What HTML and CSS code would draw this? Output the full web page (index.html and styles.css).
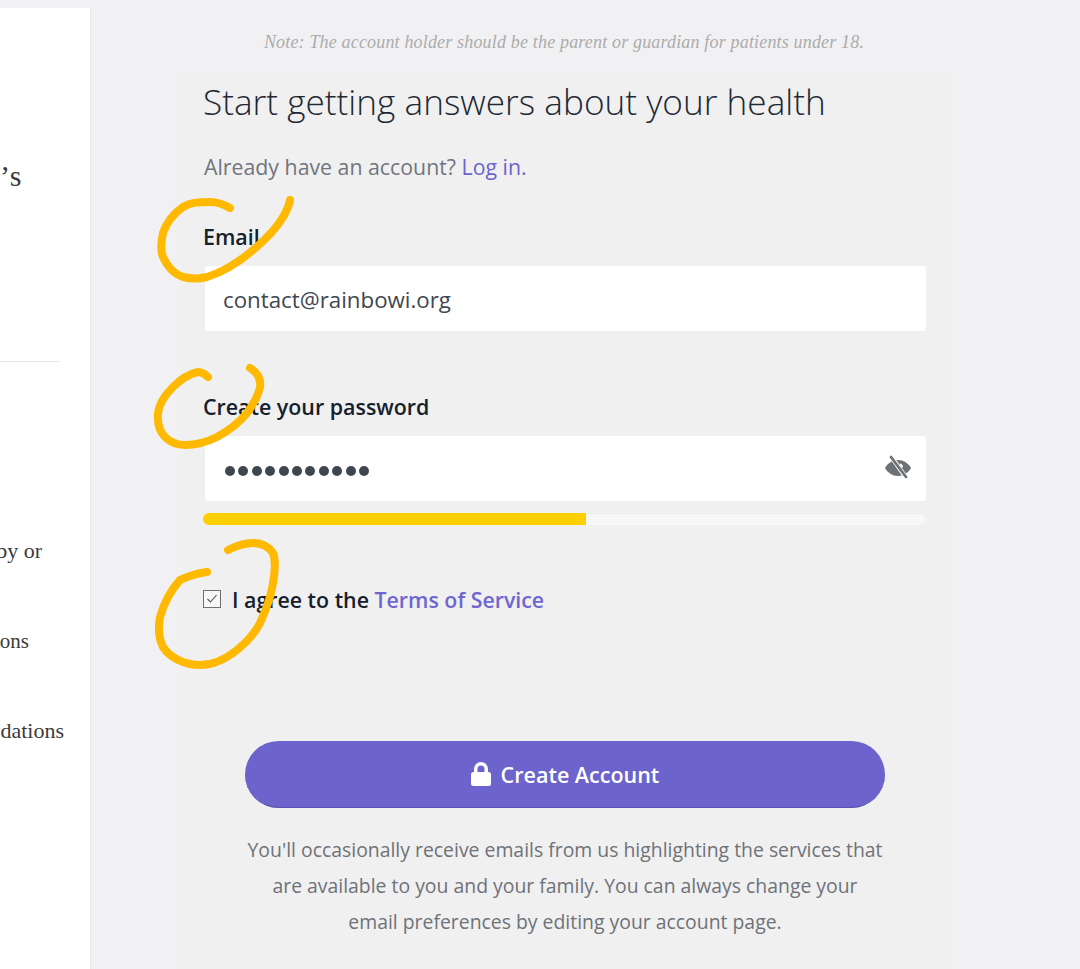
FILE: index.html
```html
<!DOCTYPE html>
<html>
<head>
  <title>Create account</title>
  <link rel="stylesheet" href="styles.css">
</head>
<body>

<div class="page">
  <aside class="side">
    <p class="side-text side-title">’s</p>
    <div class="side-rule"></div>
    <p class="side-text side-first">by or</p>
    <p class="side-text side-second">ons</p>
    <p class="side-text side-third">dations</p>
  </aside>

  <main class="main">
    <p class="note">Note: The account holder should be the parent or guardian for patients under 18.</p>

    <section class="card">
      <h1 class="title">Start getting answers about your health</h1>
      <p class="login">Already have an account? <a href="#">Log in.</a></p>

      <label class="label label-email">Email</label>
      <div class="field">contact@rainbowi.org</div>

      <label class="label label-password">Create your password</label>
      <div class="field field-password">
        <span class="dots">
          <i></i><i></i><i></i><i></i><i></i><i></i><i></i><i></i><i></i><i></i><i></i>
        </span>
        <svg class="eye" viewBox="0 0 28 24" width="28" height="24">
          <path fill="#6d7276" d="M14 5C8.500 5 3.500 8.500 1 13c2.500 4.500 7.500 8 13 8s10.500-3.500 13-8C24.500 8.500 19.500 5 14 5z"/>
          <path fill="#fff" d="M16.500 8.500c1.500.5 2.700 2 2.500 3.500l-1 .8-2.800-3.600z"/>
          <path stroke="#fff" stroke-width="4.500" d="M6 0l17 24"/>
          <path stroke="#6d7276" stroke-width="2.800" stroke-linecap="round" d="M7 2l15 20"/>
        </svg>
      </div>
      <div class="strength"><div class="strength-fill"></div></div>

      <div class="agree">
        <span class="checkbox">
          <svg viewBox="0 0 18 18" width="18" height="18"><path fill="none" stroke="#555" stroke-width="1.100" d="M4.500 9l3 3 6-7"/></svg>
        </span>
        <span>I agree to the <a href="#">Terms of Service</a></span>
      </div>

      <button class="submit">
        <svg class="lock" viewBox="0 0 20 24" width="20" height="24">
          <path fill="#fff" d="M3 10V7a7 7 0 0 1 14 0v3h.500A2.500 2.500 0 0 1 20 12.500v9a2.500 2.500 0 0 1-2.500 2.500h-15A2.500 2.500 0 0 1 0 21.500v-9A2.500 2.500 0 0 1 2.500 10zm3.500 0h7V7a3.500 3.500 0 0 0-7 0z"/>
        </svg>
        Create Account
      </button>

      <p class="fineprint">You'll occasionally receive emails from us highlighting the services that<br>are available to you and your family. You can always change your<br>email preferences by editing your account page.</p>
    </section>
  </main>
</div>

<svg class="marks" viewBox="0 0 1080 969" width="1080" height="969">
  <path d="M230 208C223 204 217 202 210 202 199 202 191 202 183 207 173 214 166 224 163 233 161 242 160 250 163 257 168 268 174 274 183 277 191 279 199 279 207 277 223 272 239 262 253 250 265 240 276 229 283 217 286 212 289 206 290 200"/>
  <path d="M208 377C205 374 202 372 198 372 189 374 180 380 173 387 165 395 159 404 158 413 157 424 160 432 165 437 171 443 178 445 185 445 196 445 207 442 217 437 228 431 239 423 247 413 253 405 258 396 260 387 261 381 259 376 255 372 253 370 252 369 250 368"/>
  <path d="M207 572C198 573 189 576 180 580 171 590 164 603 160 617 158 628 159 639 163 647 170 658 185 665 200 665 213 665 227 658 237 650 247 642 255 633 260 623 266 610 271 597 273 583 275 572 276 561 273 553 268 546 261 543 253 543 244 543 236 546 228 550"/>
</svg>

</body>
</html>
```

FILE: styles.css
```css
body {
  margin: 0;
  background: #f1f1f3;
  font-family: "Open Sans", sans-serif;
  overflow: hidden;
}

a {
  color: #6c63cc;
  text-decoration: none;
}

.page {
  display: flex;
  height: 969px;
  padding-top: 8px;
  box-sizing: border-box;
  overflow: hidden;
}

.side {
  width: 90px;
  flex: none;
  background: #fff;
  border-right: 1px solid #e9e9eb;
  overflow: hidden;
  font-family: "Liberation Serif", serif;
  color: #3a3a3a;
}

.side-text {
  margin: 0;
  white-space: nowrap;
  display: flex;
  justify-content: flex-end;
  font-size: 22px;
  line-height: 26px;
}

.side-title {
  font-size: 30px;
  line-height: 32px;
  letter-spacing: 1.500px;
  margin-top: 152px;
  width: 23px;
}

.side-rule {
  width: 60px;
  height: 1px;
  background: #e8e8e8;
  margin-top: 169px;
}

.side-first {
  width: 42px;
  margin-top: 176px;
}

.side-second {
  width: 29px;
  margin-top: 64px;
  font-size: 21px;
}

.side-third {
  width: 64px;
  margin-top: 64px;
}

.main {
  flex: 1;
  min-width: 0;
}

.note {
  width: 766px;
  height: 43px;
  margin: 24px 0 0 90px;
  text-align: center;
  font-family: "Liberation Serif", serif;
  font-style: italic;
  font-size: 18px;
  line-height: 20px;
  color: #acacac;
  letter-spacing: 0.170px;
}

.card {
  width: 766px;
  height: 900px;
  margin-left: 90px;
  padding: 0 21px 0 23px;
  box-sizing: border-box;
  background: #f0f0f1;
}

.title {
  margin: 0 0 0 -1px;
  padding-top: 1px;
  font-size: 35.200px;
  line-height: 50px;
  font-weight: 300;
  color: #1f2933;
}

.login {
  margin: 26px 0 0;
  font-size: 21.300px;
  line-height: 30px;
  color: #71757c;
}

.label {
  display: block;
  margin-left: -1px;
  font-size: 21.400px;
  line-height: 30px;
  font-weight: 600;
  color: #16202a;
}

.label-email {
  margin-top: 40px;
}

.label-password {
  margin-top: 61px;
}

.field {
  height: 65px;
  margin: 14px 0 0 1px;
  padding: 2px 14px 0 18px;
  box-sizing: border-box;
  display: flex;
  align-items: center;
  justify-content: space-between;
  background: #fff;
  border-radius: 3px;
  font-size: 22.300px;
  color: #3f4650;
  width: 721px;
}

.dots {
  display: flex;
  gap: 3.400px;
  margin: 3px 0 0 2px;
}

.dots i {
  width: 10px;
  height: 10px;
  border-radius: 50%;
  background: #3e4750;
}

.eye {
  margin-top: -6px;
}

.strength {
  height: 12px;
  margin-top: 12px;
  margin-left: -1px;
  border-radius: 6px;
  background: #f7f7f7;
  box-shadow: inset 0 1px #ececec;
  overflow: hidden;
}

.strength-fill {
  width: 53%;
  height: 100%;
  background: #ffcf00;
}

.agree {
  display: flex;
  align-items: center;
  gap: 11px;
  margin-top: 60px;
  margin-left: -1px;
  font-size: 21.350px;
  line-height: 30px;
  font-weight: 600;
  color: #16202a;
}

.agree a {
  color: #6f66cf;
}

.checkbox {
  width: 16px;
  height: 16px;
  border: 1px solid #6f6f6f;
  background: #f7f7f7;
  display: flex;
  margin-top: -2px;
}

.checkbox svg {
  margin: -1px;
}

.submit {
  display: flex;
  align-items: center;
  justify-content: center;
  gap: 10px;
  width: 640px;
  height: 67px;
  margin: 126px 0 0 41px;
  border: 0;
  border-bottom: 1px solid #5a52b0;
  border-radius: 34px;
  background: #6c63cc;
  color: #fff;
  font-family: inherit;
  font-size: 21.500px;
  font-weight: 600;
}

.fineprint {
  margin: 24px 0 0;
  width: 722px;
  text-align: center;
  font-size: 19.400px;
  line-height: 36px;
  color: #6f7277;
}

.marks {
  position: absolute;
  left: 0;
  top: 0;
  pointer-events: none;
}

.marks path {
  fill: none;
  stroke: #ffb900;
  stroke-width: 8;
  stroke-linecap: round;
  stroke-linejoin: round;
}
```
